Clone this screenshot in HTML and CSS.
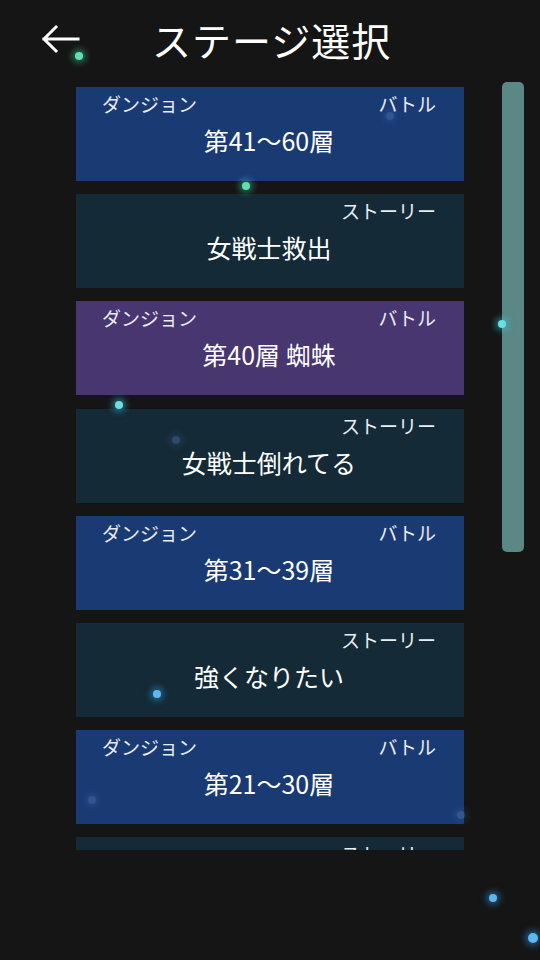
FILE: index.html
```html
<!DOCTYPE html>
<html lang="ja">

<head>
  <meta charset="UTF-8">
  <meta name="viewport" content="width=device-width, initial-scale=1.0">
  <title>ステージ選択</title>
  <link rel="stylesheet" href="styles.css">
</head>

<body>
<div id="stage-select">
  <div class="header">
    <svg class="back-icon" width="40" height="32" viewBox="0 0 40 32">
      <path d="M4 16 H38 M4 16 L16 4 M4 16 L16 28" stroke="#fff" stroke-width="3" fill="none" stroke-linecap="square"/>
    </svg>
    <h1 class="title">ステージ選択</h1>
  </div>

  <div class="body-row">
    <div class="stage-list">
      <div class="stage-card dungeon">
        <div class="labels"><span>ダンジョン</span><span>バトル</span></div>
        <div class="stage-name">第41～60層</div>
      </div>
      <div class="stage-card story">
        <div class="labels"><span></span><span>ストーリー</span></div>
        <div class="stage-name">女戦士救出</div>
      </div>
      <div class="stage-card boss">
        <div class="labels"><span>ダンジョン</span><span>バトル</span></div>
        <div class="stage-name">第40層 蜘蛛</div>
      </div>
      <div class="stage-card story">
        <div class="labels"><span></span><span>ストーリー</span></div>
        <div class="stage-name">女戦士倒れてる</div>
      </div>
      <div class="stage-card dungeon">
        <div class="labels"><span>ダンジョン</span><span>バトル</span></div>
        <div class="stage-name">第31～39層</div>
      </div>
      <div class="stage-card story">
        <div class="labels"><span></span><span>ストーリー</span></div>
        <div class="stage-name">強くなりたい</div>
      </div>
      <div class="stage-card dungeon">
        <div class="labels"><span>ダンジョン</span><span>バトル</span></div>
        <div class="stage-name">第21～30層</div>
      </div>
      <div class="stage-card story">
        <div class="labels"><span></span><span>ストーリー</span></div>
      </div>
    </div>
    <div class="scrollbar"></div>
  </div>

  <!-- floating particles -->
  <span class="spark green" style="left:79px; top:56px;"></span>
  <span class="spark green" style="left:246px; top:186px;"></span>
  <span class="spark faint" style="left:390px; top:116px;"></span>
  <span class="spark cyan" style="left:502px; top:324px;"></span>
  <span class="spark cyan" style="left:119px; top:405px;"></span>
  <span class="spark faint" style="left:176px; top:440px;"></span>
  <span class="spark blue" style="left:157px; top:694px;"></span>
  <span class="spark faint" style="left:92px; top:800px;"></span>
  <span class="spark faint" style="left:461px; top:815px;"></span>
  <span class="spark blue" style="left:493px; top:898px;"></span>
  <span class="spark blue big" style="left:533px; top:938px;"></span>
</div>
</body>

</html>
```

FILE: styles.css
```css
body {
  margin: 0;
  padding: 0;
  background-color: #151515;
  font-family: "Noto Sans CJK JP", "Noto Sans", sans-serif;
  color: #fff;
}

#stage-select {
  position: relative;
  width: 540px;
  height: 960px;
  overflow: hidden;
}

.header {
  height: 82px;
  display: flex;
  align-items: center;
  padding-left: 40px;
  box-sizing: border-box;
  padding-bottom: 4px;
}

.back-icon {
  display: block;
}

.title {
  margin: 0 0 0 72px;
  font-size: 39px;
  font-weight: normal;
  letter-spacing: 1px;
  line-height: 50px;
}

.body-row {
  display: flex;
  align-items: flex-start;
}

.stage-list {
  margin-left: 76px;
  width: 388px;
  height: 768px;
  padding-top: 5px;
  box-sizing: border-box;
  overflow: hidden;
  display: flex;
  flex-direction: column;
  gap: 13.2px;
}

.stage-card {
  flex: none;
  height: 94px;
  padding: 6px 28px 0 26px;
  box-sizing: border-box;
}

.dungeon {
  background-color: #1a3a74;
}

.story {
  background-color: #142a36;
}

.boss {
  background-color: #47366f;
}

.labels {
  display: flex;
  justify-content: space-between;
  font-size: 19px;
  line-height: 22px;
  color: #e8ecf4;
}

.stage-name {
  margin-top: 7px;
  text-align: center;
  font-size: 25px;
  line-height: 36px;
}

.scrollbar {
  margin-left: 38px;
  width: 22px;
  height: 470px;
  border-radius: 5px;
  background-color: #5b8884;
}

.spark {
  position: absolute;
  width: 8px;
  height: 8px;
  margin: -4px 0 0 -4px;
  border-radius: 50%;
}

.green {
  background-color: #5fe0b0;
  box-shadow: 0 0 6px 3px rgba(60, 200, 150, 0.5);
}

.cyan {
  background-color: #66e0e8;
  box-shadow: 0 0 6px 3px rgba(60, 190, 210, 0.5);
}

.blue {
  background-color: #5cb8ef;
  box-shadow: 0 0 6px 3px rgba(50, 150, 220, 0.5);
}

.big {
  width: 10px;
  height: 10px;
  margin: -5px 0 0 -5px;
}

.faint {
  background-color: rgba(90, 140, 200, 0.35);
  box-shadow: 0 0 6px 3px rgba(70, 120, 190, 0.2);
}
```
